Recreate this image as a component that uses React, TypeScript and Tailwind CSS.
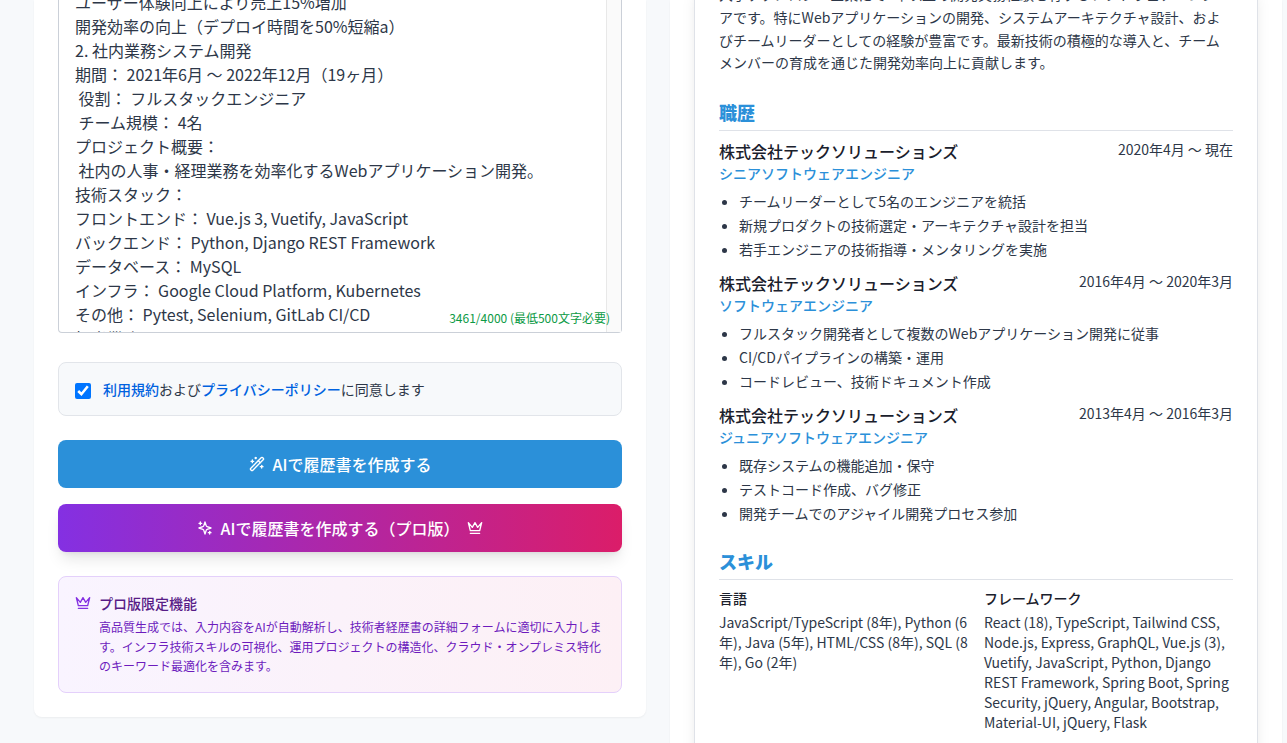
import { useState } from 'react';
import type { ReactNode } from 'react';
import { WandSparkles } from 'lucide-react';

const MAX_LENGTH = 4000;
const MIN_LENGTH = 500;

const initialText = `ユーザー体験向上により売上15%増加
開発効率の向上（デプロイ時間を50%短縮a）
2. 社内業務システム開発
期間： 2021年6月 〜 2022年12月（19ヶ月）
 役割： フルスタックエンジニア
 チーム規模： 4名
プロジェクト概要：
 社内の人事・経理業務を効率化するWebアプリケーション開発。
技術スタック：
フロントエンド： Vue.js 3, Vuetify, JavaScript
バックエンド： Python, Django REST Framework
データベース： MySQL
インフラ： Google Cloud Platform, Kubernetes
その他： Pytest, Selenium, GitLab CI/CD
担当業務：`;

const jobs = [
    {
        company: '株式会社テックソリューションズ',
        role: 'シニアソフトウェアエンジニア',
        period: '2020年4月 〜 現在',
        points: [
            'チームリーダーとして5名のエンジニアを統括',
            '新規プロダクトの技術選定・アーキテクチャ設計を担当',
            '若手エンジニアの技術指導・メンタリングを実施'
        ]
    },
    {
        company: '株式会社テックソリューションズ',
        role: 'ソフトウェアエンジニア',
        period: '2016年4月 〜 2020年3月',
        points: [
            'フルスタック開発者として複数のWebアプリケーション開発に従事',
            'CI/CDパイプラインの構築・運用',
            'コードレビュー、技術ドキュメント作成'
        ]
    },
    {
        company: '株式会社テックソリューションズ',
        role: 'ジュニアソフトウェアエンジニア',
        period: '2013年4月 〜 2016年3月',
        points: [
            '既存システムの機能追加・保守',
            'テストコード作成、バグ修正',
            '開発チームでのアジャイル開発プロセス参加'
        ]
    }
];

const skills = [
    {
        title: '言語',
        items: 'JavaScript/TypeScript (8年), Python (6年), Java (5年), HTML/CSS (8年), SQL (8年), Go (2年)'
    },
    {
        title: 'フレームワーク',
        items: 'React (18), TypeScript, Tailwind CSS, Node.js, Express, GraphQL, Vue.js (3), Vuetify, JavaScript, Python, Django REST Framework, Spring Boot, Spring Security, jQuery, Angular, Bootstrap, Material-UI, jQuery, Flask'
    }
];

function Icon({ className, children }: { className: string; children: ReactNode }) {
    return (
        <svg
            viewBox="0 0 24 24"
            fill="none"
            stroke="currentColor"
            strokeWidth="2"
            strokeLinecap="round"
            strokeLinejoin="round"
            aria-hidden="true"
            className={className}
        >
            {children}
        </svg>
    );
}

function CrownIcon({ className }: { className: string }) {
    return (
        <Icon className={className}>
            <path d="m2 4 3 12h14l3-12-6 7-4-7-4 7-6-7zm3 16h14" />
        </Icon>
    );
}

function SparklesIcon({ className }: { className: string }) {
    return (
        <Icon className={className}>
            <path d="m12 3-1.912 5.813a2 2 0 0 1-1.275 1.275L3 12l5.813 1.912a2 2 0 0 1 1.275 1.275L12 21l1.912-5.813a2 2 0 0 1 1.275-1.275L21 12l-5.813-1.912a2 2 0 0 1-1.275-1.275L12 3Z" />
            <path d="M5 3v4" />
            <path d="M19 17v4" />
            <path d="M3 5h4" />
            <path d="M17 19h4" />
        </Icon>
    );
}

function ResumeForm() {
    const [text, setText] = useState(initialText);
    const [agreed, setAgreed] = useState(true);
    const count = 3461 + text.length - initialText.length;

    return (
        <section className="self-start rounded-b-lg bg-white px-6 pb-6 shadow-xs">
            <div className="relative -mt-2.5">
                <textarea
                    aria-label="職務経歴"
                    value={text}
                    onChange={e => setText(e.target.value)}
                    className="block h-[343px] w-full resize-none overflow-hidden rounded-b-sm border border-t-0 border-[#cbd0d8] bg-white px-4 text-base text-[#2d3748] focus:outline-none"
                />
                <div className="absolute top-0 right-px bottom-px w-[15px] border-l border-[#e8e8e8] bg-[#fafafa]" />
                <div className="absolute right-3 bottom-[7px] text-xs text-[#0c9a45]">
                    {count}/{MAX_LENGTH} (最低{MIN_LENGTH}文字必要)
                </div>
            </div>

            <div className="mt-[29px] flex items-start gap-3 rounded-lg border border-[#e2e5ea] bg-[#f7f9fb] p-4">
                <input
                    id="agree"
                    type="checkbox"
                    checked={agreed}
                    onChange={e => setAgreed(e.target.checked)}
                    className="mt-1 h-4 w-4"
                />
                <label htmlFor="agree" className="text-sm text-[#2d3748]">
                    <a href="#terms" className="font-medium text-[#0062e0]">利用規約</a>
                    および
                    <a href="#privacy" className="font-medium text-[#0062e0]">プライバシーポリシー</a>
                    に同意します
                </label>
            </div>

            <button
                type="button"
                className="mt-6 flex h-12 w-full items-center justify-center gap-2 rounded-lg bg-[#2b90d9] font-medium text-white"
            >
                <WandSparkles className="h-4 w-4" />
                AIで履歴書を作成する
            </button>
            <button
                type="button"
                className="mt-4 flex h-12 w-full items-center justify-center gap-2 rounded-lg bg-linear-to-r/srgb from-[#8430e2] to-[#db1d69] font-medium text-white shadow-lg"
            >
                <SparklesIcon className="h-4 w-4" />
                AIで履歴書を作成する（プロ版）
                <CrownIcon className="h-4 w-4" />
            </button>

            <div className="mt-6 flex items-start gap-2 rounded-lg border border-[#e4d0fb] bg-linear-to-r/srgb from-[#f9f4ff] to-[#fdf0f5] p-4">
                <CrownIcon className="mt-0.5 h-4 w-4 shrink-0 text-[#8430e2]" />
                <div>
                    <p className="mb-1 text-sm font-medium text-[#581c87]">プロ版限定機能</p>
                    <p className="text-xs leading-relaxed text-[#6d1bbd]">
                        高品質生成では、入力内容をAIが自動解析し、技術者経歴書の詳細フォームに適切に入力します。インフラ技術スキルの可視化、運用プロジェクトの構造化、クラウド・オンプレミス特化のキーワード最適化を含みます。
                    </p>
                </div>
            </div>
        </section>
    );
}

function SectionTitle({ children }: { children: ReactNode }) {
    return <h2 className="mb-2 border-b border-[#dfe2e8] pb-1 text-lg font-extrabold text-[#2b90d9]">{children}</h2>;
}

function ResumePreview() {
    return (
        <section className="bg-white px-6 shadow-xs">
            <article className="-mt-[17px] border-x border-[#dfe2e8] bg-white px-6 pb-12 text-sm text-[#2d3748] shadow-lg">
                <p className="mb-6 leading-relaxed">
                    大手テクノロジー企業にて8年以上の開発実務経験を有するソフトウェアエンジニアです。特にWebアプリケーションの開発、システムアーキテクチャ設計、およびチームリーダーとしての経験が豊富です。最新技術の積極的な導入と、チームメンバーの育成を通じた開発効率向上に貢献します。
                </p>

                <SectionTitle>職歴</SectionTitle>
                <div className="mb-6 space-y-3">
                    {jobs.map(job => (
                        <div key={job.period}>
                            <div className="flex items-start justify-between">
                                <div>
                                    <h3 className="text-base font-medium text-[#1a202c]">{job.company}</h3>
                                    <p className="font-medium text-[#2b90d9]">{job.role}</p>
                                </div>
                                <span>{job.period}</span>
                            </div>
                            <ul className="mt-2 list-disc space-y-1 pl-5">
                                {job.points.map(point => (
                                    <li key={point}>{point}</li>
                                ))}
                            </ul>
                        </div>
                    ))}
                </div>

                <SectionTitle>スキル</SectionTitle>
                <div className="grid grid-cols-2 gap-4">
                    {skills.map(skill => (
                        <div key={skill.title}>
                            <h3 className="mb-1 font-medium text-[#1a202c]">{skill.title}</h3>
                            <p>{skill.items}</p>
                        </div>
                    ))}
                </div>
            </article>
        </section>
    );
}

export default function App() {
    return (
        <main
            lang="ja"
            className="grid h-screen grid-cols-2 gap-6 overflow-hidden bg-[#f7f9fb] pr-[5px] pl-[34px] font-['Noto_Sans_CJK_JP',sans-serif]"
        >
            <ResumeForm />
            <ResumePreview />
        </main>
    );
}
